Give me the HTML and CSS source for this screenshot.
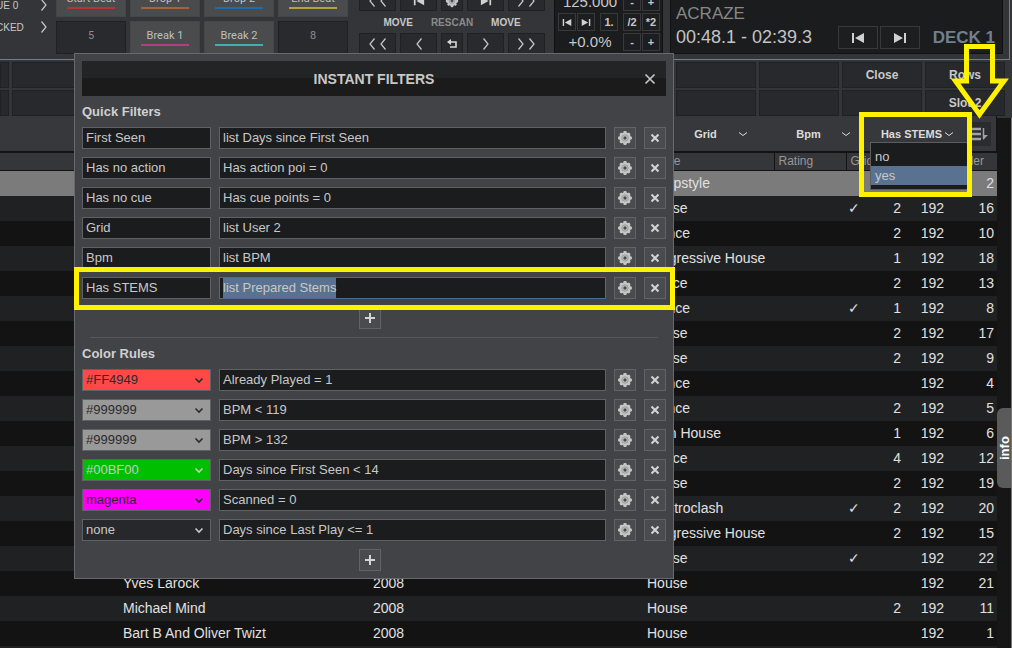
FILE: index.html
```html
<!DOCTYPE html>
<html lang="en">
<head>
<meta charset="utf-8">
<title>Instant Filters</title>
<link rel="stylesheet" href="styles.css">
</head>
<body>
<svg class="defs" aria-hidden="true">
  <symbol id="gear" viewBox="0 0 16 16">
    <g fill="#c6c6c6">
      <circle cx="8" cy="8" r="5.8"/>
      <rect x="6.400" y="1" width="3.200" height="14" rx="1"/><rect x="1" y="6.400" width="14" height="3.200" rx="1"/>
      <g transform="rotate(45 8 8)"><rect x="6.600" y="1.200" width="2.800" height="13.600" rx="1"/><rect x="1.200" y="6.600" width="13.600" height="2.800" rx="1"/></g>
    </g>
    <circle cx="8" cy="8" r="3.2" fill="none" stroke="#9a9a9a"/>
    <circle cx="8" cy="8" r="1.7" fill="#4a4b4e"/>
  </symbol>
  <symbol id="cross" viewBox="0 0 16 16"><path d="M4.500 4.500l7 7M11.500 4.500l-7 7" stroke="#d4d4d4" stroke-width="2"/></symbol>
  <symbol id="plus" viewBox="0 0 16 16"><path d="M8 3v10M3 8h10" stroke="#d4d4d4" stroke-width="2"/></symbol>
  <symbol id="down" viewBox="0 0 10 10"><path d="M1.500 3.500L5 7l3.500-3.500" fill="none" stroke="currentColor" stroke-width="1.600"/></symbol>
  <symbol id="down-thin" viewBox="0 0 10 10"><path d="M1 3.500L5 6.500l4-3" fill="none" stroke="currentColor"/></symbol>
  <symbol id="lt" viewBox="0 0 8 14"><path d="M6.500 1.500L2 7l4.500 5.500" fill="none" stroke="#c8c8c8" stroke-width="1.200"/></symbol>
  <symbol id="gt" viewBox="0 0 8 14"><path d="M1.500 1.500L6 7l-4.500 5.500" fill="none" stroke="#c8c8c8" stroke-width="1.200"/></symbol>
  <symbol id="prev" viewBox="0 0 14 12"><path d="M1 1h2v10H1zM13 1v10L4 6z" fill="#d0d0d0"/></symbol>
  <symbol id="next" viewBox="0 0 14 12"><path d="M11 1h2v10h-2zM1 1v10l9-5z" fill="#d0d0d0"/></symbol>
</svg>

<section class="deck">
  <div class="side">
    <div class="side-row"><span>UE 0</span><svg width="8" height="14"><use href="#gt"/></svg></div>
    <div class="side-row"><span>CKED</span><svg width="8" height="14"><use href="#gt"/></svg></div>
  </div>
  <div class="pads">
    <button class="pad red">Start Beat</button><button class="pad orange">Drop 1</button><button class="pad blue">Drop 2</button><button class="pad gold">End Beat</button>
    <button class="pad empty">5</button><button class="pad pink">Break 1</button><button class="pad teal">Break 2</button><button class="pad empty">8</button>
  </div>
  <div class="move">
    <div class="move-row">
      <button class="key" aria-label="Back far"><svg width="8" height="14"><use href="#lt"/></svg><svg width="8" height="14"><use href="#lt"/></svg></button>
      <button class="key" aria-label="Previous"><svg width="12" height="12"><use href="#prev"/></svg></button>
      <button class="key" aria-label="Settings"><svg width="14" height="14"><use href="#gear"/></svg></button>
      <button class="key" aria-label="Next"><svg width="12" height="12"><use href="#next"/></svg></button>
      <button class="key" aria-label="Forward far"><svg width="8" height="14"><use href="#gt"/></svg><svg width="8" height="14"><use href="#gt"/></svg></button>
    </div>
    <div class="move-labels"><span>MOVE</span><span class="dim">RESCAN</span><span>MOVE</span></div>
    <div class="move-row">
      <button class="key" aria-label="Move back far"><svg width="8" height="14"><use href="#lt"/></svg><svg width="8" height="14"><use href="#lt"/></svg></button>
      <button class="key" aria-label="Move back"><svg width="8" height="14"><use href="#lt"/></svg></button>
      <button class="key" aria-label="Rescan"><svg width="11" height="10" viewBox="0 0 11 10"><path d="M3 3h6v5H3" fill="none" stroke="#d8d8d8" stroke-width="1.600"/><path d="M0 3l4-3v6z" fill="#d8d8d8"/></svg></button>
      <button class="key" aria-label="Move forward"><svg width="8" height="14"><use href="#gt"/></svg></button>
      <button class="key" aria-label="Move forward far"><svg width="8" height="14"><use href="#gt"/></svg><svg width="8" height="14"><use href="#gt"/></svg></button>
    </div>
  </div>
  <div class="tempo">
    <div class="tempo-row"><span class="value">125.000</span><button class="mini">-</button><button class="mini">+</button></div>
    <div class="tempo-row"><button class="mini" aria-label="Beat back"><svg width="10" height="9"><use href="#prev"/></svg></button><button class="mini" aria-label="Beat forward"><svg width="10" height="9"><use href="#next"/></svg></button><button class="mini one">1.</button><button class="mini half">/2</button><button class="mini">*2</button></div>
    <div class="tempo-row"><span class="value">+0.0%</span><button class="mini">-</button><button class="mini">+</button></div>
  </div>
  <div class="info">
    <div class="artist">ACRAZE</div>
    <div class="info-row">
      <span class="time">00:48.1 - 02:39.3</span>
      <button class="skip" aria-label="Previous track"><svg width="14" height="12"><use href="#prev"/></svg></button>
      <button class="skip" aria-label="Next track"><svg width="14" height="12"><use href="#next"/></svg></button>
      <span class="deck-name">DECK 1</span>
    </div>
  </div>
</section>

<section class="slots">
  <button aria-label="Slot"></button><button aria-label="Slot"></button><button aria-label="Slot"></button><button aria-label="Slot"></button><button aria-label="Slot"></button><button aria-label="Slot"></button><button aria-label="Slot"></button><button aria-label="Slot"></button><button aria-label="Slot"></button><button aria-label="Slot"></button><button aria-label="Slot"></button><button>Close</button><button>Rows</button>
  <button aria-label="Slot"></button><button aria-label="Slot"></button><button aria-label="Slot"></button><button aria-label="Slot"></button><button aria-label="Slot"></button><button aria-label="Slot"></button><button aria-label="Slot"></button><button aria-label="Slot"></button><button aria-label="Slot"></button><button aria-label="Slot"></button><button aria-label="Slot"></button><button aria-label="Slot"></button><button>Slot 2</button>
</section>

<main class="browser">
  <div class="list">
    <div class="quick">
      <div class="pick"><select aria-label="Grid filter"><option>Grid</option></select><svg width="10" height="10"><use href="#down-thin"/></svg></div>
      <div class="pick"><select aria-label="Bpm filter"><option>Bpm</option></select><svg width="10" height="10"><use href="#down-thin"/></svg></div>
      <div class="pick">
        <select aria-label="Has STEMS filter"><option>Has STEMS</option></select><svg width="10" height="10"><use href="#down-thin"/></svg>
        <ul class="menu" role="listbox" aria-label="Has STEMS"><li role="option">no</li><li role="option" aria-selected="true">yes</li></ul>
        <div class="mark mark-menu"></div>
        <svg class="arrow" width="62" height="80" viewBox="0 0 62 80"><path d="M18.500 5.500h26V40H56L31.500 73.500 7.500 40h11z"/></svg>
      </div>
      <button class="sort" aria-label="Filter list"><svg width="20" height="18" viewBox="0 0 20 18"><path d="M0 4h12M0 9h12M0 14h12" stroke="#a2a2a4" stroke-width="2.500"/><path d="M14.500 3v11" stroke="#a2a2a4" stroke-width="1.500"/><path d="M14 10h5l-5 5z" fill="#a2a2a4"/></svg></button>
    </div>
    <table class="tracks">
      <colgroup><col><col class="w-artist"><col class="w-year"><col class="w-genre"><col class="w-rating"><col class="w-grid"><col class="w-count"><col class="w-len"><col class="w-order"></colgroup>
      <thead><tr><th></th><th></th><th></th><th>Genre</th><th class="sep">Rating</th><th class="sep">Grid</th><th></th><th></th><th class="order">Order</th></tr></thead>
      <tbody>
        <tr class="current"><td></td><td></td><td></td><td>Jumpstyle</td><td></td><td></td><td></td><td></td><td>2</td></tr>
        <tr><td></td><td></td><td></td><td>House</td><td></td><td>✓</td><td>2</td><td>192</td><td>16</td></tr>
        <tr><td></td><td></td><td></td><td>Trance</td><td></td><td></td><td>2</td><td>192</td><td>10</td></tr>
        <tr><td></td><td></td><td></td><td>Progressive House</td><td></td><td></td><td>1</td><td>192</td><td>18</td></tr>
        <tr><td></td><td></td><td></td><td>Dance</td><td></td><td></td><td>2</td><td>192</td><td>13</td></tr>
        <tr><td></td><td></td><td></td><td>Trance</td><td></td><td>✓</td><td>1</td><td>192</td><td>8</td></tr>
        <tr><td></td><td></td><td></td><td>House</td><td></td><td></td><td>2</td><td>192</td><td>17</td></tr>
        <tr><td></td><td></td><td></td><td>House</td><td></td><td></td><td>2</td><td>192</td><td>9</td></tr>
        <tr><td></td><td></td><td></td><td>Trance</td><td></td><td></td><td></td><td>192</td><td>4</td></tr>
        <tr><td></td><td></td><td></td><td>Trance</td><td></td><td></td><td>2</td><td>192</td><td>5</td></tr>
        <tr><td></td><td></td><td></td><td>Tech House</td><td></td><td></td><td>1</td><td>192</td><td>6</td></tr>
        <tr><td></td><td></td><td></td><td>Dance</td><td></td><td></td><td>4</td><td>192</td><td>12</td></tr>
        <tr><td></td><td></td><td></td><td>House</td><td></td><td></td><td>2</td><td>192</td><td>19</td></tr>
        <tr><td></td><td></td><td></td><td>Electroclash</td><td></td><td>✓</td><td>2</td><td>192</td><td>20</td></tr>
        <tr><td></td><td></td><td></td><td>Progressive House</td><td></td><td></td><td>2</td><td>192</td><td>15</td></tr>
        <tr><td></td><td></td><td></td><td>House</td><td></td><td>✓</td><td></td><td>192</td><td>22</td></tr>
        <tr><td></td><td>Yves Larock</td><td>2008</td><td>House</td><td></td><td></td><td></td><td>192</td><td>21</td></tr>
        <tr><td></td><td>Michael Mind</td><td>2008</td><td>House</td><td></td><td></td><td>2</td><td>192</td><td>11</td></tr>
        <tr><td></td><td>Bart B And Oliver Twizt</td><td>2008</td><td>House</td><td></td><td></td><td></td><td>192</td><td>1</td></tr>
        <tr><td></td><td></td><td></td><td></td><td></td><td></td><td></td><td></td><td></td></tr>
      </tbody>
    </table>
  </div>
  <div class="rail"><button class="info-tab">info</button></div>
</main>

<section class="dialog" role="dialog" aria-labelledby="dialog-title">
  <header class="title"><h1 id="dialog-title">INSTANT FILTERS</h1><button class="close" aria-label="Close dialog"><svg width="12" height="12" viewBox="0 0 12 12"><path d="M1.500 1.500l9 9M10.500 1.500l-9 9" stroke="#c4c4c4" stroke-width="1.700"/></svg></button></header>
  <h2>Quick Filters</h2>
  <div class="rules">
    <div class="rule"><input aria-label="Name 1" value="First Seen"><input aria-label="Filter 1" value="list Days since First Seen"><button aria-label="Edit"><svg><use href="#gear"/></svg></button><button aria-label="Remove"><svg><use href="#cross"/></svg></button></div>
    <div class="rule"><input aria-label="Name 2" value="Has no action"><input aria-label="Filter 2" value="Has action poi = 0"><button aria-label="Edit"><svg><use href="#gear"/></svg></button><button aria-label="Remove"><svg><use href="#cross"/></svg></button></div>
    <div class="rule"><input aria-label="Name 3" value="Has no cue"><input aria-label="Filter 3" value="Has cue points = 0"><button aria-label="Edit"><svg><use href="#gear"/></svg></button><button aria-label="Remove"><svg><use href="#cross"/></svg></button></div>
    <div class="rule"><input aria-label="Name 4" value="Grid"><input aria-label="Filter 4" value="list User 2"><button aria-label="Edit"><svg><use href="#gear"/></svg></button><button aria-label="Remove"><svg><use href="#cross"/></svg></button></div>
    <div class="rule"><input aria-label="Name 5" value="Bpm"><input aria-label="Filter 5" value="list BPM"><button aria-label="Edit"><svg><use href="#gear"/></svg></button><button aria-label="Remove"><svg><use href="#cross"/></svg></button></div>
    <div class="rule"><input aria-label="Name 6" value="Has STEMS"><input class="active" id="active-filter" aria-label="Filter 6" value="list Prepared Stems"><button aria-label="Edit"><svg><use href="#gear"/></svg></button><button aria-label="Remove"><svg><use href="#cross"/></svg></button><div class="mark mark-rule"></div></div>
  </div>
  <div class="add-row"><button class="add" aria-label="Add filter"><svg><use href="#plus"/></svg></button></div>
  <hr>
  <h2>Color Rules</h2>
  <div class="rules">
    <div class="rule"><div class="color c-red"><select aria-label="Color 1"><option>#FF4949</option></select><svg><use href="#down"/></svg></div><input aria-label="Rule 1" value="Already Played = 1"><button aria-label="Edit"><svg><use href="#gear"/></svg></button><button aria-label="Remove"><svg><use href="#cross"/></svg></button></div>
    <div class="rule"><div class="color c-gray"><select aria-label="Color 2"><option>#999999</option></select><svg><use href="#down"/></svg></div><input aria-label="Rule 2" value="BPM &lt; 119"><button aria-label="Edit"><svg><use href="#gear"/></svg></button><button aria-label="Remove"><svg><use href="#cross"/></svg></button></div>
    <div class="rule"><div class="color c-gray"><select aria-label="Color 3"><option>#999999</option></select><svg><use href="#down"/></svg></div><input aria-label="Rule 3" value="BPM &gt; 132"><button aria-label="Edit"><svg><use href="#gear"/></svg></button><button aria-label="Remove"><svg><use href="#cross"/></svg></button></div>
    <div class="rule"><div class="color c-green"><select aria-label="Color 4"><option>#00BF00</option></select><svg><use href="#down"/></svg></div><input aria-label="Rule 4" value="Days since First Seen &lt; 14"><button aria-label="Edit"><svg><use href="#gear"/></svg></button><button aria-label="Remove"><svg><use href="#cross"/></svg></button></div>
    <div class="rule"><div class="color c-magenta"><select aria-label="Color 5"><option>magenta</option></select><svg><use href="#down"/></svg></div><input aria-label="Rule 5" value="Scanned = 0"><button aria-label="Edit"><svg><use href="#gear"/></svg></button><button aria-label="Remove"><svg><use href="#cross"/></svg></button></div>
    <div class="rule"><div class="color"><select aria-label="Color 6"><option>none</option></select><svg><use href="#down"/></svg></div><input aria-label="Rule 6" value="Days since Last Play &lt;= 1"><button aria-label="Edit"><svg><use href="#gear"/></svg></button><button aria-label="Remove"><svg><use href="#cross"/></svg></button></div>
  </div>
  <div class="add-row"><button class="add" aria-label="Add color rule"><svg><use href="#plus"/></svg></button></div>
</section>
<script src="script.js"></script>
</body>
</html>
```

FILE: script.js
```js
const active = document.getElementById("active-filter");
active.focus({ preventScroll: true });
active.select();
```

FILE: styles.css
```css
* { box-sizing: border-box; }
body {
  margin: 0;
  height: 100vh;
  overflow: hidden;
  position: relative;
  display: flex;
  flex-direction: column;
  background: #343538;
  color: #c8c8c8;
  font-family: "Liberation Sans", Arial, sans-serif;
  font-size: 13px;
}
.defs { position: absolute; width: 0; height: 0; }
button, input, select { font: inherit; color: inherit; margin: 0; padding: 0; border-radius: 0; }
button { display: flex; align-items: center; justify-content: center; }
select { appearance: none; }
svg { flex: none; }

/* deck */
.deck {
  flex: none;
  height: 60px;
  margin-right: 2px;
  overflow: hidden;
  display: flex;
  align-items: flex-end;
  border: solid #70808f;
  border-width: 0 1px 1px 0;
  padding-bottom: 5px;
}
.side { width: 56px; flex: none; font-size: 10px; padding-bottom: 16px; }
.side-row { display: flex; justify-content: space-between; align-items: center; height: 22px; margin-left: -4px; padding-right: 8px; }
.pads { flex: none; display: grid; grid-template-columns: repeat(4, 70px); grid-auto-rows: 33px; gap: 4px; }
.pad {
  position: relative;
  background: #4a4b4d;
  border: 1px solid #454648;
  color: #bfbfbf;
  font-family: Roboto, sans-serif;
  font-size: 11px;
  padding-bottom: 4px;
}
.pad::after { content: ""; position: absolute; left: 10px; right: 10px; bottom: 7px; height: 2px; background: currentColor; }
.pad.red::after { background: #b83236; }
.pad.orange::after { background: #a8623a; }
.pad.blue::after { background: #1c6cb0; }
.pad.gold::after { background: #b5a042; }
.pad.pink::after { background: #b83c80; }
.pad.teal::after { background: #40b0ae; }
.pad.empty { background: #292a2d; border-color: #1f2022; color: #8c8c8c; }
.pad.empty::after { display: none; }
.move { flex: none; width: 186px; margin-left: 11px; }
.move-row { display: grid; grid-template-columns: 37px 37px 22px 37px 37px; gap: 4px; }
.key { height: 21px; gap: 3px; background: #292a2d; border: 1px solid #1f2022; }
.move-labels { display: flex; justify-content: center; gap: 18px; height: 22px; align-items: center; font-size: 10px; font-weight: bold; }
.dim { color: #8a8a8a; }
.tempo {
  flex: none;
  width: 109px;
  margin-left: 9px;
  padding: 2px 2px 2px 3px;
  background: #1b1c1e;
  border: 1px solid #101112;
}
.tempo-row { display: flex; gap: 1px; height: 18px; margin-top: 2px; }
.value { flex: 1; font-size: 15px; line-height: 18px; text-align: center; }
.mini { width: 18px; height: 18px; background: #1d1e20; border: 1px solid #38393c; font-size: 11px; font-weight: bold; }
.one { margin-left: 4px; }
.half { margin-left: auto; }
.info {
  flex: 1;
  height: 84px;
  margin-left: 7px;
  margin-right: 6px;
  padding: 0 7px 4px 5px;
  background: #1b1c1e;
  border: 1px solid #101112;
  display: flex;
  flex-direction: column;
  justify-content: flex-end;
}
.artist { font-size: 17px; line-height: 25px; color: #888; }
.info-row { display: flex; align-items: center; gap: 2px; }
.time { font-size: 18px; color: #c4c4c4; }
.skip { width: 40px; height: 23px; background: #1d1e20; border: 1px solid #38393c; }
.time + .skip { margin-left: auto; }
.deck-name { margin-left: 11px; color: #70808f; font-size: 17px; font-weight: bold; }

/* slot buttons */
.slots {
  flex: none;
  display: grid;
  grid-template-columns: 9px repeat(12, 1fr);
  grid-auto-rows: 26px;
  gap: 2px 3px;
  padding: 2px 7px 0 0;
}
.slots button { background: #28292c; border: 1px solid #202123; font-size: 12px; font-weight: bold; min-width: 0; }

/* browser */
.browser { flex: 1; min-height: 0; display: flex; }
.list { flex: 1; min-width: 0; background: #131313; }
.quick {
  display: flex;
  justify-content: flex-end;
  align-items: center;
  height: 35px;
  margin-right: 1px;
  background: #37383b;
  padding-right: 5px;
}
.pick { width: 103px; display: grid; align-items: center; position: relative; color: #dcdcdc; }
.pick > select { grid-area: 1 / 1; height: 24px; border: 0; background: transparent; font-size: 11px; font-weight: bold; text-align: center; text-align-last: center; }
.pick > svg { grid-area: 1 / 1; justify-self: end; margin-right: 9px; }
.pick:nth-child(3) { width: 109px; }
.pick:nth-child(3) > svg { margin-right: 15px; }
.pick:nth-child(3) > select { margin-right: 6px; }
.menu {
  position: absolute;
  z-index: 4;
  left: 10px;
  top: 20px;
  width: 99px;
  margin: 0;
  padding: 4px 0;
  list-style: none;
  background: #1b1c1e;
  border: 1px solid #5c5d60;
  color: #c8c8c8;
}
.menu li { height: 19px; line-height: 19px; padding-left: 4px; }
.menu [aria-selected] { background: #5a7292; }
.mark { position: absolute; z-index: 6; border: 5px solid #fff200; pointer-events: none; }
.mark-menu { left: -1px; top: -10px; width: 113px; height: 85px; }
.pick > .arrow { position: absolute; z-index: 7; left: 88px; top: -81px; margin: 0; fill: none; stroke: #fff200; stroke-width: 5; }
.sort { width: 22px; height: 24px; background: #2b2c2f; border: 0; padding-right: 2px; }
.tracks { width: 100%; table-layout: fixed; border-collapse: collapse; font-size: 14px; margin-top: 2px; color: #e0e0e0; }
.w-artist { width: 250px; }
.w-year { width: 274px; }
.w-genre { width: 131px; }
.w-rating { width: 72px; }
.w-grid { width: 26px; }
.w-count { width: 33px; }
.w-len { width: 43px; }
.w-order { width: 49px; }
.tracks th { height: 17px; padding: 0 4px; background: #35363a; border-bottom: 1px solid #131313; color: #979797; font-size: 12px; line-height: 16px; font-weight: normal; text-align: left; white-space: nowrap; }
.tracks th.sep { border-left: 1px solid #131313; }
.tracks th.order { text-align: right; padding-right: 13px; }
.tracks td { height: 25px; padding: 0 4px; line-height: 25px; white-space: nowrap; }
.tracks tbody tr:nth-child(even) { background: #202123; }
.tracks tbody tr.current { background: #7b7b7b; }
.tracks td:nth-child(6) { padding: 0 0 0 2px; }
.tracks td:nth-child(n+7) { text-align: right; }
.tracks td:last-child { padding-right: 3px; }
.rail { position: relative; flex: none; width: 15px; margin-top: 2px; background: #161616; border-right: 1px solid #777; }
.info-tab {
  position: absolute;
  top: 290px;
  left: 0;
  width: 14px;
  height: 80px;
  border: 0;
  border-radius: 0 6px 6px 0;
  background: #5a5a5a;
  color: #fff;
  font-size: 13px;
  font-weight: bold;
  writing-mode: vertical-rl;
  transform: rotate(180deg);
}

/* dialog */
.dialog {
  position: absolute;
  z-index: 5;
  left: 74px;
  top: 53px;
  width: 600px;
  padding: 7px;
  background: #424347;
  border: 1px solid #69696d;
}
.title { position: relative; display: flex; align-items: center; justify-content: center; height: 35px; background: linear-gradient(#232426 50%, #1b1b1b 50%); }
.title h1 { margin: 0; font-size: 14px; }
.close { position: absolute; right: 10px; background: none; border: 0; }
.dialog h2 { margin: 0; font-size: 13px; line-height: 31px; color: #d0d0d0; }
.rules { display: grid; gap: 8px; }
.rule { position: relative; display: grid; grid-template-columns: 129px 1fr 22px 22px; gap: 8px; height: 22px; }
.rule input { min-width: 0; padding: 0 3px; background: #1b1c1e; border: 1px solid #606165; outline: 0; line-height: 20px; }
.rule input.active { border-color: #4f6a90; caret-color: transparent; }
.rule input::selection { background: #5a7292; color: #c8c8c8; }
.rule button, .add { width: 22px; height: 22px; background: #4a4b4e; border: 1px solid #626367; }
.rule button svg, .add svg { width: 16px; height: 16px; }
.add-row { display: flex; justify-content: center; padding: 8px 8px 0 0; }
.dialog hr { margin: 8px 8px 0; border: 0; height: 1px; background: #56575b; }
.mark-rule { inset: -10px -9px -11px -8px; }
.color { display: grid; align-items: center; background: #27282b; }
.color select { grid-area: 1 / 1; height: 22px; padding: 0 3px 2px; background: transparent; border: 1px solid #606165; }
.color svg { grid-area: 1 / 1; justify-self: end; width: 10px; height: 10px; margin-right: 7px; pointer-events: none; }
.c-red { background: #ff4949; color: #2b2b2b; }
.c-gray { background: #999; color: #2b2b2b; }
.c-green { background: #00bf00; }
.c-magenta { background: #f0f; color: #2b2b2b; }
```
